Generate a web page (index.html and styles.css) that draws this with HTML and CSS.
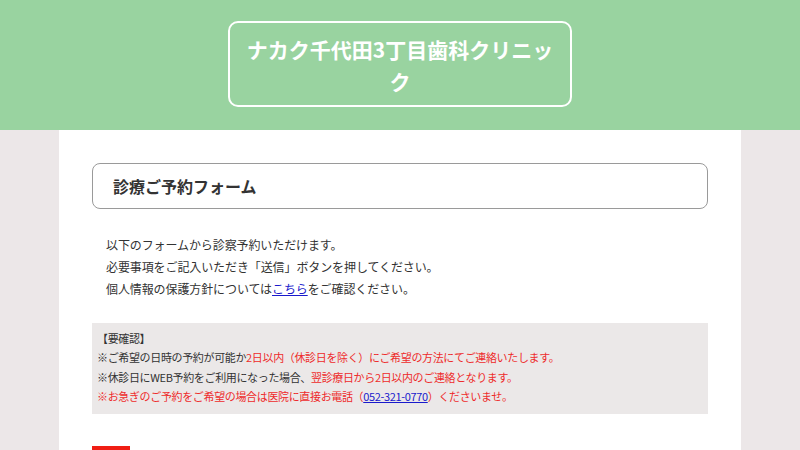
FILE: index.html
```html
<!DOCTYPE html>
<html lang="ja">
<head>
<meta charset="utf-8">
<title>診療ご予約フォーム</title>
<link rel="stylesheet" href="styles.css">
</head>
<body>
<header class="site-header">
  <h1 class="logo-box">ナカク千代田3丁目歯科クリニック</h1>
</header>
<main class="page">
  <h2 class="form-title">診療ご予約フォーム</h2>
  <div class="intro">
    <p>以下のフォームから診察予約いただけます。</p>
    <p>必要事項をご記入いただき「送信」ボタンを押してください。</p>
    <p>個人情報の保護方針については<a href="#">こちら</a>をご確認ください。</p>
  </div>
  <div class="notice">
    <p>【要確認】</p>
    <p>※ご希望の日時の予約が可能か<span class="red">2日以内（休診日を除く）にご希望の方法にてご連絡いたします。</span></p>
    <p>※休診日にWEB予約をご利用になった場合、<span class="red">翌診療日から2日以内のご連絡となります。</span></p>
    <p class="red">※お急ぎのご予約をご希望の場合は医院に直接お電話（<a href="#">052-321-0770</a>）くださいませ。</p>
  </div>
  <div class="field">
    <span class="req">必須</span>
    <span class="field-label">お名前</span>
  </div>
</main>
</body>
</html>
```

FILE: styles.css
```css
* { box-sizing: border-box; }
html, body { margin: 0; padding: 0; }
body {
  background: #ece7e8;
  font-family: "Noto Sans CJK JP", "Noto Sans", sans-serif;
  color: #333;
}
.site-header {
  background: #99d3a0;
  height: 130px;
  padding-top: 21px;
  display: flex;
  justify-content: center;
}
.logo-box {
  margin: 0;
  width: 344px;
  height: 86px;
  border: 2px solid #fff;
  border-radius: 10px;
  padding: 10px 15px;
  color: #fff;
  font-size: 21px;
  font-weight: 700;
  line-height: 32px;
  text-align: center;
}
.page {
  width: 682px;
  margin: 0 auto;
  background: #fff;
  padding: 33px 33px 0;
  min-height: 320px;
}
.form-title {
  margin: 0;
  height: 46px;
  border: 1px solid #9a9a9a;
  border-radius: 8px;
  padding-left: 20px;
  display: flex;
  align-items: center;
  font-size: 16px;
  font-weight: bold;
  color: #333;
}
.intro {
  margin-top: 25px;
  padding-left: 14px;
  font-size: 12px;
  line-height: 22px;
  letter-spacing: -0.1px;
}
.intro p, .notice p { margin: 0; }
a { color: #1a1acc; }
.notice {
  margin-top: 23px;
  background: #ebe8e8;
  padding: 6px 5px 8px;
  font-size: 11px;
  line-height: 19.3px;
  letter-spacing: -0.35px;
}
.red { color: #ee2b2b; }
.notice a { color: #1a1acc; }
.field {
  margin-top: 32px;
  display: flex;
  align-items: center;
  gap: 10px;
}
.req {
  background: #f01e14;
  color: #fff;
  font-size: 11px;
  width: 38px;
  height: 22px;
  display: flex;
  align-items: center;
  justify-content: center;
}
.field-label { font-size: 13px; }
```
